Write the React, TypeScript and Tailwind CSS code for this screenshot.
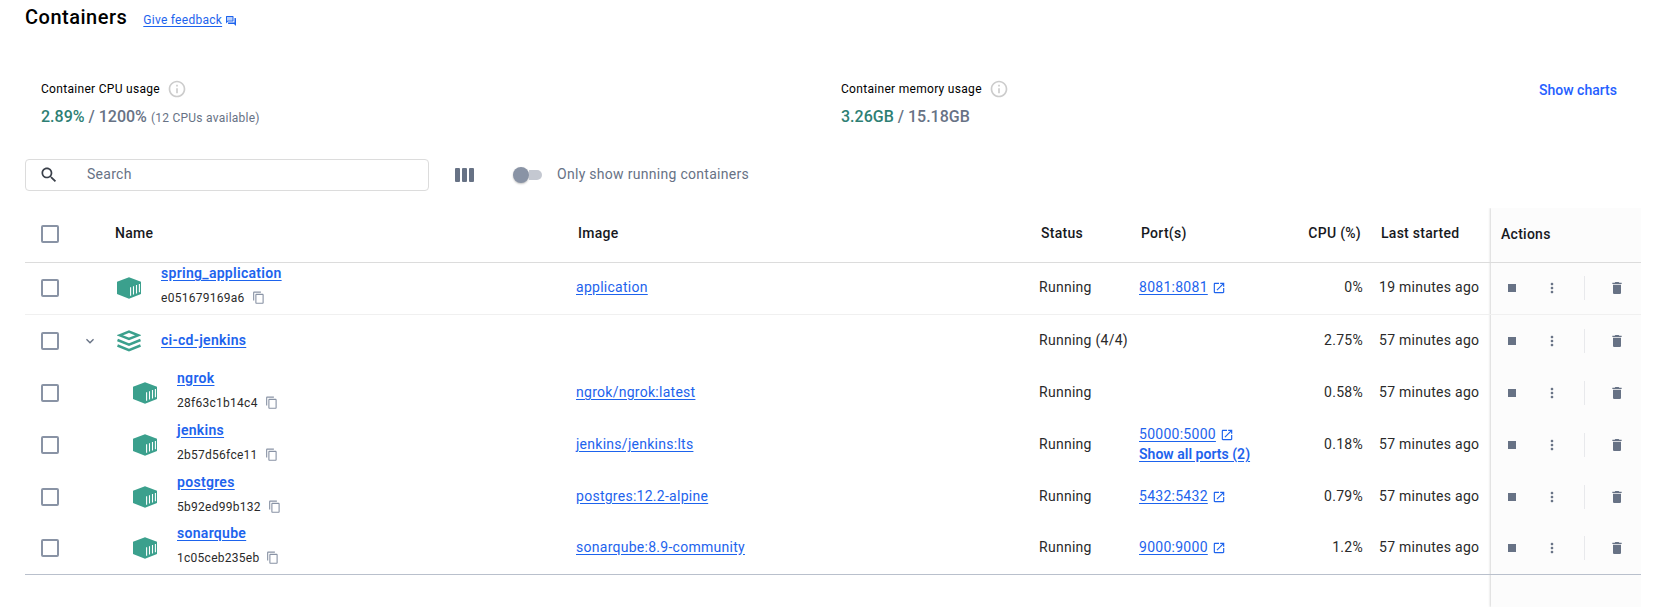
import React from "react";

type IconProps = { d: string; size: number; className?: string };

function Icon({ d, size, className = "" }: IconProps) {
  return (
    <svg viewBox="0 0 24 24" width={size} height={size} fill="currentColor" className={`shrink-0 ${className}`}>
      <path d={d} />
    </svg>
  );
}

const paths = {
  copy: "M16 1H4c-1.100 0-2 .9-2 2v14h2V3h12V1zm3 4H8c-1.100 0-2 .9-2 2v14c0 1.100.9 2 2 2h11c1.100 0 2-.9 2-2V7c0-1.100-.9-2-2-2zm0 16H8V7h11v14z",
  open: "M19 19H5V5h7V3H5c-1.110 0-2 .9-2 2v14c0 1.100.89 2 2 2h14c1.100 0 2-.9 2-2v-7h-2v7zM14 3v2h3.590l-9.830 9.830 1.410 1.410L19 6.410V10h2V3h-7z",
  trash: "M6 19c0 1.100.9 2 2 2h8c1.100 0 2-.9 2-2V7H6v12zM19 4h-3.500l-1-1h-5l-1 1H5v2h14V4z",
  stop: "M6 6h12v12H6z",
  more: "M12 8c1.100 0 2-.9 2-2s-.9-2-2-2-2 .9-2 2 .9 2 2 2zm0 2c-1.100 0-2 .9-2 2s.9 2 2 2 2-.9 2-2-.9-2-2-2zm0 6c-1.100 0-2 .9-2 2s.9 2 2 2 2-.9 2-2-.9-2-2-2z",
  down: "M7.410 8.590 12 13.170l4.590-4.580L18 10l-6 6-6-6 1.410-1.410z",
  search:
    "M15.500 14h-.79l-.28-.27C15.410 12.590 16 11.110 16 9.500 16 5.910 13.090 3 9.500 3S3 5.910 3 9.500 5.910 16 9.500 16c1.610 0 3.090-.59 4.230-1.570l.27.28v.79l5 4.990L20.490 19l-4.990-5zm-6 0C7.010 14 5 11.990 5 9.500S7.010 5 9.500 5 14 7.010 14 9.500 11.990 14 9.500 14z",
  info: "M11 7h2v2h-2zm0 4h2v6h-2zm1-9C6.480 2 2 6.480 2 12s4.480 10 10 10 10-4.480 10-10S17.520 2 12 2zm0 18c-4.410 0-8-3.590-8-8s3.590-8 8-8 8 3.590 8 8-3.590 8-8 8z",
};

function FeedbackIcon() {
  return (
    <svg viewBox="0 0 24 24" width="12" height="12" className="shrink-0 text-[#1d63ed]">
      <path d="M3 3h13v8H3z" fill="currentColor" opacity="0.3" />
      <path
        fill="currentColor"
        d="M15 4v7H5.170L4 12.170V4h11m1-2H3c-.55 0-1 .45-1 1v14l4-4h10c.55 0 1-.45 1-1V3c0-.55-.45-1-1-1zm5 4h-2v9H6v2c0 .55.45 1 1 1h11l4 4V7c0-.55-.45-1-1-1z"
      />
    </svg>
  );
}

function ContainerIcon() {
  return (
    <svg viewBox="0 0 24 22" width="24" height="22" className="shrink-0">
      <path d="M12 .3 24 4.800v12.200L12 21.700 0 17V4.800z" fill="#3ba08d" />
      <path d="M13.600 10.300v8.500M16.500 9.200v8.400M19.500 8.100v8.300M22.400 7v8.200" stroke="#fff" strokeWidth="1.100" fill="none" />
    </svg>
  );
}

function StackIcon() {
  return (
    <svg viewBox="0 0 24 22" width="24" height="22" className="shrink-0" fill="none" stroke="#3ba08d" strokeWidth="2.500">
      <path d="M2.600 5.300 12 1.600l9.400 3.700L12 9z" />
      <path d="M.5 10 12 14.600 23.500 10M.5 15.500 12 20.100l11.500-4.600" />
    </svg>
  );
}

function Checkbox() {
  return <span className="block size-[18px] rounded-[2px] border-2 border-[#8993a5]" />;
}

type Row = {
  name: string;
  id?: string;
  image?: string;
  status: string;
  port?: string;
  allPorts?: string;
  cpu: string;
  started: string;
  kind: "single" | "group" | "child";
};

const rows: Row[] = [
  { kind: "single", name: "spring_application", id: "e051679169a6", image: "application", status: "Running", port: "8081:8081", cpu: "0%", started: "19 minutes ago" },
  { kind: "group", name: "ci-cd-jenkins", status: "Running (4/4)", cpu: "2.75%", started: "57 minutes ago" },
  { kind: "child", name: "ngrok", id: "28f63c1b14c4", image: "ngrok/ngrok:latest", status: "Running", cpu: "0.58%", started: "57 minutes ago" },
  { kind: "child", name: "jenkins", id: "2b57d56fce11", image: "jenkins/jenkins:lts", status: "Running", port: "50000:5000", allPorts: "Show all ports (2)", cpu: "0.18%", started: "57 minutes ago" },
  { kind: "child", name: "postgres", id: "5b92ed99b132", image: "postgres:12.2-alpine", status: "Running", port: "5432:5432", cpu: "0.79%", started: "57 minutes ago" },
  { kind: "child", name: "sonarqube", id: "1c05ceb235eb", image: "sonarqube:8.9-community", status: "Running", port: "9000:9000", cpu: "1.2%", started: "57 minutes ago" },
];

const columns = "grid grid-cols-[90px_461px_463px_100px_124px_100px_128px_150px]";
const link = "text-[#1d63ed] underline underline-offset-2";

function TableRow({ row, last }: { row: Row; last: boolean }) {
  const bordered = row.kind === "single" || last;
  const border = row.kind === "single" ? "border-b border-[#f0f0f0] pb-[2px]" : last ? "border-b border-[#b9c0cc] pb-[2px]" : "";
  const nameMargin = !row.id ? "mb-[2px]" : bordered ? "mb-1" : "mb-[6px]";
  return (
    <div className={`${columns} h-[52px] items-stretch ${border}`}>
      <div className="flex items-center pl-4">
        <Checkbox />
        {row.kind === "group" && <Icon d={paths.down} size={16} className="ml-[23px] text-[#677285]" />}
      </div>
      <div className={`flex items-center ${row.kind === "child" ? "pl-[18px]" : "pl-[2px]"}`}>
        {row.kind === "group" ? <StackIcon /> : <ContainerIcon />}
        <div className={`ml-5 ${nameMargin}`}>
          <a className={`block w-fit leading-5 font-semibold tracking-[0.3px] ${link}`}>{row.name}</a>
          {row.id && (
            <div className="mt-[5px] flex h-5 items-center text-xs tracking-[0.27px]">
              {row.id}
              <Icon d={paths.copy} size={13.33} className="ml-[7px] text-[#8993a5]" />
            </div>
          )}
        </div>
      </div>
      <div className="flex items-center pb-[2px]">{row.image && <a className={link}>{row.image}</a>}</div>
      <div className="flex items-center pb-[2px] whitespace-nowrap">{row.status}</div>
      <div className="flex flex-col justify-center pb-[2px] whitespace-nowrap">
        {row.port && (
          <div className="flex h-5 items-center text-[#1d63ed]">
            <a className={link}>{row.port}</a>
            <Icon d={paths.open} size={14} className={`ml-1 ${bordered ? "mt-[3px]" : "mt-[2px]"}`} />
          </div>
        )}
        {row.allPorts && <a className={`leading-5 font-semibold tracking-[0.02px] ${link}`}>{row.allPorts}</a>}
      </div>
      <div className="flex items-center justify-end pb-[2px]">{row.cpu}</div>
      <div className="flex items-center pb-[2px] pl-4 whitespace-nowrap">{row.started}</div>
      <div className="flex items-center pl-[13px] text-[#677285]">
        <Icon d={paths.stop} size={16} />
        <Icon d={paths.more} size={16} className="ml-6" />
        <span className="ml-6 h-6 w-px bg-[#e8e9ec]" />
        <Icon d={paths.trash} size={16} className="ml-6" />
      </div>
    </div>
  );
}

function Usage({ label, used, total, note }: { label: string; used: string; total: string; note?: string }) {
  return (
    <div className="w-[800px]">
      <div className="flex h-5 items-center text-xs tracking-[0.3px] text-black">
        {label}
        <Icon d={paths.info} size={20} className="ml-[7px] text-[#cccccc]" />
      </div>
      <div className="mt-[6px] flex h-6 items-baseline text-base font-medium tracking-normal text-[#677285]">
        <span className="text-[#2e7f74]">{used}</span>
        <span className="whitespace-pre"> / {total}</span>
        {note && <span className="ml-1 text-xs font-normal tracking-[0.25px]">{note}</span>}
      </div>
    </div>
  );
}

export default function App() {
  return (
    <div className="flex h-[607px] w-[1657px] flex-col overflow-hidden bg-white pr-4 pl-[25px] font-['Roboto',sans-serif] text-sm tracking-[0.27px] text-[#2a2a2a]">
      <header className="flex h-[34px] items-center">
        <h1 className="text-xl font-medium tracking-[0.5px] text-black">Containers</h1>
        <a className={`mt-[5px] ml-4 text-xs ${link}`}>Give feedback</a>
        <span className="mt-[7px] ml-[3px]">
          <FeedbackIcon />
        </span>
      </header>

      <section className="mt-[45px] flex h-[49px] pl-4">
        <Usage label="Container CPU usage" used="2.89%" total="1200%" note="(12 CPUs available)" />
        <Usage label="Container memory usage" used="3.26GB" total="15.18GB" />
        <a className="mt-px -ml-[102px] leading-5 font-medium tracking-normal whitespace-nowrap text-[#2560ff]">Show charts</a>
      </section>

      <section className="mt-[31px] flex h-8 items-center text-[#677285]">
        <div className="flex h-8 w-[404px] items-center rounded-[4px] border border-[#dcdcdc] pl-[13px]">
          <Icon d={paths.search} size={20} className="text-[#393f49]" />
          <span className="ml-[28px] pb-[2px]">Search</span>
        </div>
        <div className="ml-[26px] flex gap-[2px]">
          <span className="h-[14px] w-[5px] rounded-[1px] bg-[#677285]" />
          <span className="h-[14px] w-[5px] rounded-[1px] bg-[#677285]" />
          <span className="h-[14px] w-[5px] rounded-[1px] bg-[#677285]" />
        </div>
        <div className="ml-[39px] flex items-center">
          <span className="size-4 rounded-full bg-[#8993a5] shadow-[0_1px_2px_rgba(0,0,0,0.25)]" />
          <span className="h-[10px] w-[13px] rounded-r-full bg-[#c4c8d1]" />
        </div>
        <span className="ml-[15px] pb-[2px] tracking-[0.29px]">Only show running containers</span>
      </section>

      <main className="mt-[17px] grid h-[399px] w-[1616px]">
        <div className="col-start-1 row-start-1 ml-auto w-[150px] bg-[#fcfcfc] shadow-[-1px_0_2px_rgba(0,0,0,0.16)] [clip-path:inset(0_0_0_-4px)]" />
        <div className="z-10 col-start-1 row-start-1">
          <div className={`${columns} h-[55px] items-center border-b border-[#dcdcdc] pb-1 font-medium text-[#17191e]`}>
            <div className="pt-px pl-4">
              <Checkbox />
            </div>
            <div>Name</div>
            <div className="pl-[2px]">Image</div>
            <div className="pl-[2px]">Status</div>
            <div className="pl-[2px]">Port(s)</div>
            <div className="pr-[2px] text-right">CPU (%)</div>
            <div className="pl-[18px]">Last started</div>
            <div className="pt-[2px] pl-[10px]">Actions</div>
          </div>
          {rows.map((row, i) => (
            <TableRow key={row.name} row={row} last={i === rows.length - 1} />
          ))}
        </div>
      </main>
    </div>
  );
}
